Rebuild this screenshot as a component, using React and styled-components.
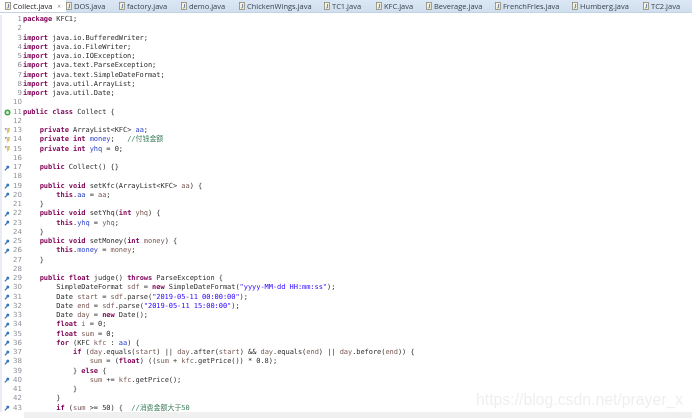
import React from "react";
import styled, { createGlobalStyle } from "styled-components";

const Global = createGlobalStyle`
  html, body { margin: 0; padding: 0; background: #fff; }
  body { width: 692px; height: 418px; overflow: hidden; }
`;

const Window = styled.div`
  position: relative;
  width: 692px;
  height: 418px;
  display: flex;
  flex-direction: column;
  overflow: hidden;
  background: #fff;
  filter: blur(0.35px);
`;

const TabBar = styled.div`
  flex: 0 0 13px;
  display: flex;
  background: linear-gradient(#dbe7f4, #d0dfee);
  border-bottom: 1px solid #c3d3e3;
  box-sizing: border-box;
`;

const Tab = styled.div`
  flex: 0 0 ${(p) => p.$w}px;
  display: flex;
  align-items: center;
  gap: 2px;
  padding-left: ${(p) => p.$pad}px;
  box-sizing: border-box;
  background: ${(p) => (p.$active ? "#fff" : "transparent")};
  font: 7.5px/12px "Open Sans", "Noto Sans", sans-serif;
  color: ${(p) => (p.$active ? "#222" : "#3a4350")};
  white-space: nowrap;
`;

const CloseMark = styled.span`
  margin-left: 3px;
  font-size: 5px;
  color: #888;
`;

const Body = styled.div`
  flex: 1;
  min-height: 0;
  display: flex;
  flex-direction: column;
  padding-top: 2px;
`;

const Editor = styled.div`
  flex: 1;
  min-height: 0;
  overflow: hidden;
  border-left: 2px solid #e9edf3;
`;

const Row = styled.div`
  height: 9.25px;
  display: flex;
  align-items: center;
  white-space: pre;
`;

const Marker = styled.span`
  flex: 0 0 8px;
  height: 9px;
  margin-left: 1px;
  display: flex;
  align-items: center;
  justify-content: center;
`;

const LineNo = styled.span`
  flex: 0 0 11px;
  margin-right: 1px;
  text-align: right;
  font: 7px/9px "DejaVu Sans", sans-serif;
  color: #8a8f96;
`;

const Code = styled.code`
  font: 7px/9px "DejaVu Sans Mono", "Noto Sans CJK SC", monospace;
  letter-spacing: -0.05px;
  color: #2c2c2c;
`;

const Keyword = styled.span`
  color: #7f0055;
  font-weight: 700;
`;
const Field = styled.span`
  color: #2a3fc8;
`;
const Str = styled.span`
  color: #2a00ff;
`;
const Comment = styled.span`
  color: #3f7f5f;
`;
const Local = styled.span`
  color: #7a5a55;
`;

const ScrollBar = styled.div`
  flex: 0 0 6px;
  margin-left: 24px;
  background: #f0f0f0;
`;

const Watermark = styled.div`
  position: absolute;
  left: 476px;
  top: 391px;
  font: 15.8px/18px "Liberation Sans", sans-serif;
  color: rgba(90, 90, 90, 0.1);
  white-space: nowrap;
`;

const TABS = [
  ["Collect.java", 66, 5],
  ["DOS.java", 53, 0],
  ["factory.java", 62, 0],
  ["demo.java", 58, 0],
  ["ChickenWings.java", 85, 0],
  ["TC1.java", 52, 0],
  ["KFC.java", 50, 0],
  ["Beverage.java", 69, 0],
  ["FrenchFries.java", 77, 0],
  ["Humberg.java", 71, 0],
  ["TC2.java", 46, 0],
];

const FileIcon = () => (
  <svg width="6" height="8" viewBox="0 0 6 8">
    <rect x="0.5" y="0.5" width="5" height="7" fill="#f6f1dc" stroke="#8b8a78" strokeWidth="0.8" />
    <path d="M3.6 2v3.2q0 1-1.4.8" fill="none" stroke="#5a6fa0" strokeWidth="0.9" />
  </svg>
);

const Run = () => (
  <svg width="7" height="7" viewBox="0 0 7 7">
    <circle cx="3.5" cy="3.5" r="3" fill="#3ea84a" />
    <circle cx="3.5" cy="3.5" r="1.5" fill="#d8f0d8" />
  </svg>
);

const Warn = () => (
  <svg width="7" height="8" viewBox="0 0 7 8">
    <path d="M.6 1.4 3 .8 1.8 3.4Z" fill="#7d92b5" />
    <path d="M3.5 1h2.8L5 3.5h1.4L2.6 7.6l1-2.9H2.4Z" fill="#dcc07a" />
  </svg>
);

const Override = () => (
  <svg width="6" height="6" viewBox="0 0 6 6">
    <path d="M0.8 5.4 3.2 3" stroke="#3f73ad" strokeWidth="1.2" fill="none" />
    <circle cx="3.8" cy="2.1" r="1.5" fill="#3a74b8" />
  </svg>
);

const LINES = [
  "[k|package] KFC1;",
  "",
  "[k|import] java.io.BufferedWriter;",
  "[k|import] java.io.FileWriter;",
  "[k|import] java.io.IOException;",
  "[k|import] java.text.ParseException;",
  "[k|import] java.text.SimpleDateFormat;",
  "[k|import] java.util.ArrayList;",
  "[k|import] java.util.Date;",
  "",
  "[k|public] [k|class] Collect {",
  "",
  "    [k|private] ArrayList<KFC> [f|aa];",
  "    [k|private] [k|int] [f|money];   [c|//付钱金额]",
  "    [k|private] [k|int] [f|yhq] = 0;",
  "",
  "    [k|public] Collect() {}",
  "",
  "    [k|public] [k|void] setKfc(ArrayList<KFC> [l|aa]) {",
  "        [k|this].[f|aa] = [l|aa];",
  "    }",
  "    [k|public] [k|void] setYhq([k|int] [l|yhq]) {",
  "        [k|this].[f|yhq] = [l|yhq];",
  "    }",
  "    [k|public] [k|void] setMoney([k|int] [l|money]) {",
  "        [k|this].[f|money] = [l|money];",
  "    }",
  "",
  "    [k|public] [k|float] judge() [k|throws] ParseException {",
  '        SimpleDateFormat [l|sdf] = [k|new] SimpleDateFormat([s|"yyyy-MM-dd HH:mm:ss"]);',
  '        Date [l|start] = [l|sdf].parse([s|"2019-05-11 00:00:00"]);',
  '        Date [l|end] = [l|sdf].parse([s|"2019-05-11 15:00:00"]);',
  "        Date [l|day] = [k|new] Date();",
  "        [k|float] [l|i] = 0;",
  "        [k|float] [l|sum] = 0;",
  "        [k|for] (KFC [l|kfc] : [f|aa]) {",
  "            [k|if] ([l|day].equals([l|start]) || [l|day].after([l|start]) && [l|day].equals([l|end]) || [l|day].before([l|end])) {",
  "                [l|sum] = ([k|float]) (([l|sum] + [l|kfc].getPrice()) * 0.8);",
  "            } [k|else] {",
  "                [l|sum] += [l|kfc].getPrice();",
  "            }",
  "        }",
  "        [k|if] ([l|sum] >= 50) {  [c|//消费金额大于50]",
];

const KINDS = { k: Keyword, f: Field, s: Str, c: Comment, l: Local };

const renderCode = (src) =>
  src.split(/(\[[kfscl]\|[^\]]*\])/).map((part, i) => {
    const m = part.match(/^\[([kfscl])\|([^\]]*)\]$/);
    if (!m) return part;
    const Kind = KINDS[m[1]];
    return <Kind key={i}>{m[2]}</Kind>;
  });

const OVERRIDES = new Set([17, 19, 20, 22, 23, 25, 26, 29, 30, 31, 32, 33, 34, 35, 36, 37, 38, 40, 43]);
const WARNINGS = new Set([13, 14, 15]);

const markerFor = (n) => {
  if (n === 11) return <Run />;
  if (WARNINGS.has(n)) return <Warn />;
  if (OVERRIDES.has(n)) return <Override />;
  return null;
};

export default function App() {
  return (
    <>
      <Global />
      <Window>
        <TabBar>
          {TABS.map(([name, w, pad], i) => (
            <Tab key={name} $w={w} $pad={pad} $active={i === 0}>
              <FileIcon />
              {name}
              {i === 0 && <CloseMark>✕</CloseMark>}
            </Tab>
          ))}
        </TabBar>
        <Body>
          <Editor>
            {LINES.map((src, i) => (
              <Row key={i}>
                <Marker>{markerFor(i + 1)}</Marker>
                <LineNo>{i + 1}</LineNo>
                <Code>{renderCode(src)}</Code>
              </Row>
            ))}
          </Editor>
          <ScrollBar />
        </Body>
        <Watermark>https://blog.csdn.net/prayer_x</Watermark>
      </Window>
    </>
  );
}
